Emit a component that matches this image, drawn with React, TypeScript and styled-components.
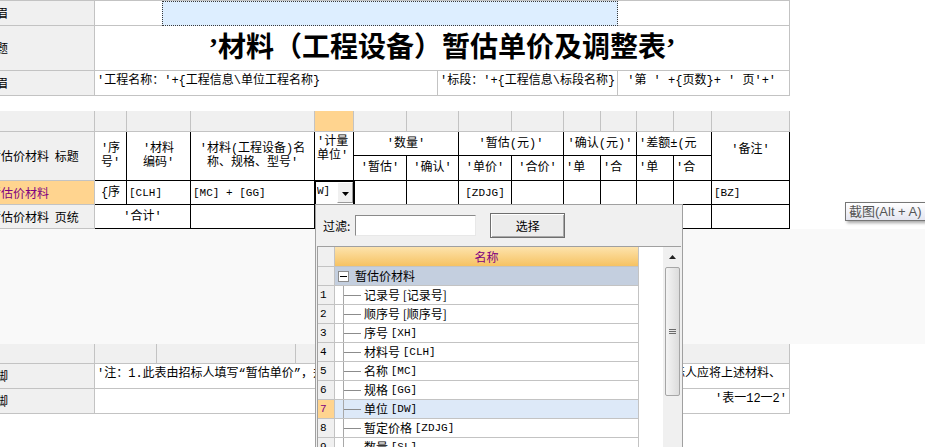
import React from "react";
import styled, { createGlobalStyle } from "styled-components";

const GRID = "#c3c3c3";
const ORANGE = "#ffd48f";
const PURPLE = "#800080";
const MONO_CJK = `"Liberation Mono", "Noto Sans CJK SC", monospace`;

const GlobalStyle = createGlobalStyle`
  * { box-sizing: border-box; }
  html, body { margin: 0; padding: 0; background: #fff; }
  body {
    font-family: ${MONO_CJK};
    font-size: 12px;
    line-height: 14px;
    color: #000;
  }
`;

const Page = styled.div`
  position: relative;
  width: 925px;
  height: 447px;
  overflow: hidden;
  display: flex;
  flex-direction: column;
  background: #fff;
`;

/* ---------- shared side labels ---------- */
const SideLabel = styled.div<{ $rows?: number; $active?: boolean }>`
  grid-column: 1;
  grid-row: span ${(p) => p.$rows ?? 1};
  display: flex;
  align-items: center;
  overflow: hidden;
  white-space: nowrap;
  background: ${(p) => (p.$active ? ORANGE : "#f0f0f0")};
  color: ${(p) => (p.$active ? PURPLE : "#000")};
  border-right: 1px solid ${GRID};
  border-bottom: 1px solid ${GRID};
  font-family: "Noto Sans CJK SC", sans-serif;
`;

const LabelText = styled.span<{ $shift: number }>`
  flex: none;
  margin-left: ${(p) => p.$shift}px;
  word-spacing: 3px;
`;

const Code = styled.span`
  font-family: "Liberation Mono", monospace;
  font-size: 11px;
`;

/* ---------- band 1 : report header ---------- */
const HeaderBand = styled.div`
  flex: none;
  display: grid;
  width: 790px;
  grid-template-columns: 95px 67px 276px 180px 172px;
  grid-template-rows: 25px 45px 25px;
  border-top: 1px solid ${GRID};
`;

const BandCell = styled.div<{ $cols?: number; $align?: "left" | "right"; $plain?: boolean }>`
  grid-column: span ${(p) => p.$cols ?? 1};
  border-right: ${(p) => (p.$plain ? "none" : `1px solid ${GRID}`)};
  border-bottom: 1px solid ${GRID};
  padding: 3px 2px 0;
  overflow: hidden;
  white-space: nowrap;
  text-align: ${(p) => p.$align ?? "left"};
`;

const SelectedRange = styled.div`
  grid-column: span 2;
  background: #ddeeff;
  border: 1px dotted #3a3a3a;
`;

const TitleCell = styled.div`
  grid-column: span 4;
  display: flex;
  align-items: center;
  justify-content: center;
  border-right: 1px solid ${GRID};
  border-bottom: 1px solid ${GRID};
  font-family: "Liberation Serif", "Noto Sans CJK SC", serif;
  font-size: 28px;
  font-weight: 700;
  line-height: 32px;
  white-space: nowrap;
`;

const BandGap = styled.div<{ $h: number; $tint?: boolean }>`
  flex: none;
  height: ${(p) => p.$h}px;
  background: ${(p) => (p.$tint ? "#f9f9f9" : "#fff")};
`;

/* ---------- band 2 : material table ---------- */
const COLS = [32, 64, 124, 39, 53, 52, 53, 52, 37, 36, 37, 38, 78];

const Sheet = styled.div`
  flex: none;
  display: grid;
  width: 790px;
  grid-template-columns: 95px ${COLS.map((c) => `${c}px`).join(" ")};
  grid-template-rows: 21px 24px 25px 24px 24px;
`;

const ColHead = styled.div<{ $active?: boolean }>`
  background: ${(p) => (p.$active ? ORANGE : "#f0f0f0")};
  border-right: 1px solid ${GRID};
  border-bottom: 1px solid ${GRID};
`;

const Cell = styled.div<{
  $rows?: number;
  $cols?: number;
  $align?: "left" | "center";
  $top?: number;
}>`
  grid-row: span ${(p) => p.$rows ?? 1};
  grid-column: span ${(p) => p.$cols ?? 1};
  display: flex;
  flex-direction: column;
  justify-content: ${(p) => (p.$top !== undefined ? "flex-start" : "center")};
  padding: ${(p) => (p.$top !== undefined ? `${p.$top}px 2px 0` : "0 2px")};
  text-align: ${(p) => p.$align ?? "center"};
  border-right: 1px solid #000;
  border-bottom: 1px solid #000;
  overflow: hidden;
  white-space: nowrap;
  background: #fff;
`;

const ActiveCell = styled.div`
  position: relative;
  z-index: 1;
  display: flex;
  justify-content: space-between;
  padding: 1px 0 1px 2px;
  background: #fff;
  border-right: 1px solid #000;
  border-bottom: 1px solid #000;
  outline: 2px solid #000;
  outline-offset: -1px;
`;

const CellValue = styled.span`
  padding-top: 2px;
  overflow: hidden;
  white-space: nowrap;
`;

const DropButton = styled.div`
  width: 16px;
  display: flex;
  align-items: center;
  justify-content: center;
  padding-top: 3px;
  background: #f0f0f0;
  border: 1px solid;
  border-color: #ffffff #9a9a9a #9a9a9a #ffffff;
`;

/* ---------- band 3 : footer ---------- */
const FooterBand = styled.div`
  flex: none;
  display: grid;
  width: 790px;
  grid-template-columns: 95px 62px 139px 150px 150px 194px;
  grid-template-rows: 20px 25px 25px;
`;

const FooterHead = styled.div`
  background: #f0f0f0;
  border-right: 1px solid ${GRID};
  border-bottom: 1px solid ${GRID};
`;

/* ---------- dropdown popup ---------- */
const Popup = styled.div`
  position: absolute;
  left: 315px;
  top: 204px;
  width: 368px;
  height: 250px;
  z-index: 5;
  display: flex;
  flex-direction: column;
  background: #f0f0f0;
  border: 1px solid #a0a0a0;
  font-family: "Noto Sans CJK SC", sans-serif;
`;

const FilterBar = styled.div`
  flex: none;
  height: 41px;
  display: flex;
  align-items: center;
  padding-left: 7px;
`;

const FilterInput = styled.div`
  width: 121px;
  height: 21px;
  margin-left: 5px;
  background: #fff;
  border: 1px solid;
  border-color: #8a8a8a #e8e8e8 #e8e8e8 #8a8a8a;
`;

const PickButton = styled.div`
  width: 75px;
  height: 25px;
  margin-left: 14px;
  display: flex;
  align-items: center;
  justify-content: center;
  background: #ececec;
  border: 1px solid #6e6e6e;
  box-shadow: inset 1px 1px 0 #ffffff, inset -1px -1px 0 #a8a8a8;
`;

const FieldGrid = styled.div`
  flex: 1;
  width: 364px;
  margin-left: 1px;
  display: flex;
  background: #fff;
  border-top: 1px solid #a0a0a0;
  border-left: 1px solid #a0a0a0;
  overflow: hidden;
`;

const FieldRows = styled.div`
  width: 321px;
  display: flex;
  flex-direction: column;
`;

const FieldRow = styled.div<{ $h?: number }>`
  flex: none;
  height: ${(p) => p.$h ?? 19}px;
  display: grid;
  grid-template-columns: 17px 304px;
`;

const RowNum = styled.div<{ $active?: boolean }>`
  display: flex;
  align-items: center;
  padding-left: 2px;
  font-family: "Liberation Mono", monospace;
  font-size: 11px;
  background: ${(p) => (p.$active ? ORANGE : "#f0f0f0")};
  color: ${(p) => (p.$active ? PURPLE : "#000")};
  border-right: 1px solid ${GRID};
  border-bottom: 1px solid ${GRID};
`;

const HeadName = styled.div`
  display: flex;
  align-items: center;
  justify-content: center;
  color: ${PURPLE};
  background: linear-gradient(#fde3ac, #f6c262);
  border-right: 1px solid ${GRID};
  border-bottom: 1px solid ${GRID};
`;

const NameCell = styled.div<{ $tone?: "group" | "active" }>`
  display: flex;
  align-items: center;
  white-space: nowrap;
  padding-left: ${(p) => (p.$tone === "group" ? 3 : 8)}px;
  background: ${(p) =>
    p.$tone === "group" ? "#c4cfdf" : p.$tone === "active" ? "#dde9f8" : "#fff"};
  border-right: 1px solid ${GRID};
  border-bottom: 1px solid ${GRID};
`;

const TreeGuide = styled.span`
  position: relative;
  align-self: stretch;
  width: 18px;
  margin-right: 3px;
  border-left: 1px solid #a8a8a8;
  &::after {
    content: "";
    position: absolute;
    left: 0;
    top: 50%;
    width: 17px;
    border-top: 1px solid #8c8c8c;
  }
`;

const Expander = styled.span`
  width: 11px;
  height: 11px;
  margin-right: 6px;
  display: flex;
  align-items: center;
  justify-content: center;
  background: #fff;
  border: 1px solid #8c8c8c;
  &::before {
    content: "";
    width: 7px;
    border-top: 1px solid #000;
  }
`;

const GridFiller = styled.div`
  width: 25px;
  background: #fff;
`;

const ScrollTrack = styled.div`
  width: 18px;
  display: flex;
  flex-direction: column;
  align-items: center;
  background: #f0f0f0;
`;

const ScrollArrow = styled.div`
  height: 20px;
  display: flex;
  align-items: center;
`;

const ScrollThumb = styled.div`
  width: 15px;
  height: 129px;
  display: flex;
  align-items: center;
  justify-content: center;
  border: 1px solid #a6a6a6;
  border-radius: 2px;
  background: linear-gradient(90deg, #f4f4f4, #dcdcdc);
`;

/* ---------- tooltip ---------- */
const Tooltip = styled.div`
  position: absolute;
  left: 845px;
  top: 202px;
  height: 19px;
  padding: 0 5px 0 3px;
  display: flex;
  align-items: center;
  white-space: nowrap;
  color: #555;
  font-family: "Liberation Sans", "Noto Sans CJK SC", sans-serif;
  font-size: 13px;
  background: linear-gradient(#ffffff, #e4e5f0);
  border: 1px solid #767676;
  box-shadow: 2px 2px 3px rgba(0, 0, 0, 0.35);
`;

const FIELDS: [string, string, boolean][] = [
  ["记录号", "[记录号]", false],
  ["顺序号", "[顺序号]", false],
  ["序号", "[XH]", true],
  ["材料号", "[CLH]", true],
  ["名称", "[MC]", true],
  ["规格", "[GG]", true],
  ["单位", "[DW]", true],
  ["暂定价格", "[ZDJG]", true],
  ["数量", "[SL]", true],
];

const NOTE =
  "'注：1.此表由招标人填写“暂估单价”，并在备注栏说明暂估价的材料、工程设备拟用在哪些清单项目上，投标人应将上述材料、";

export default function App() {
  return (
    <>
      <GlobalStyle />
      <Page>
        <HeaderBand>
          <SideLabel>
            <LabelText $shift={-16}>页眉</LabelText>
          </SideLabel>
          <BandCell $plain />
          <SelectedRange />
          <BandCell />

          <SideLabel>
            <LabelText $shift={-16}>标题</LabelText>
          </SideLabel>
          <TitleCell>’材料（工程设备）暂估单价及调整表’</TitleCell>

          <SideLabel>
            <LabelText $shift={-16}>页眉</LabelText>
          </SideLabel>
          <BandCell $cols={2}>'工程名称：'+{"{"}工程信息\单位工程名称{"}"}</BandCell>
          <BandCell>'标段：'+{"{"}工程信息\标段名称{"}"}</BandCell>
          <BandCell>&nbsp;'第 ' +{"{"}页数{"}"}+ ' 页'+'</BandCell>
        </HeaderBand>

        <BandGap $h={15} />

        <Sheet>
          <ColHead />
          {COLS.map((_, i) => (
            <ColHead key={i} $active={i === 3} />
          ))}

          <SideLabel $rows={2}>
            <LabelText $shift={-11}>暂估价材料 标题</LabelText>
          </SideLabel>
          <Cell $rows={2}>
            '序
            <br />
            号'
          </Cell>
          <Cell $rows={2}>
            '材料
            <br />
            编码'
          </Cell>
          <Cell $rows={2}>
            '材料(工程设备)名
            <br />
            称、规格、型号'
          </Cell>
          <Cell $rows={2} $align="left" $top={3}>
            '计量
            <br />
            单位'
          </Cell>
          <Cell $cols={2}>'数量'</Cell>
          <Cell $cols={2}>'暂估(元)'</Cell>
          <Cell $cols={2}>'确认(元)'</Cell>
          <Cell $cols={2} $align="left">
            '差额±(元
          </Cell>
          <Cell $rows={2} $top={11}>
            '备注'
          </Cell>
          <Cell>'暂估'</Cell>
          <Cell>'确认'</Cell>
          <Cell>'单价'</Cell>
          <Cell>'合价'</Cell>
          <Cell $align="left">'单</Cell>
          <Cell $align="left">'合</Cell>
          <Cell $align="left">'单</Cell>
          <Cell $align="left">'合</Cell>

          <SideLabel $active>
            <LabelText $shift={-11}>暂估价材料</LabelText>
          </SideLabel>
          <Cell>{"{"}序</Cell>
          <Cell $align="left">
            <Code>[CLH]</Code>
          </Cell>
          <Cell $align="left">
            <Code>[MC] + [GG]</Code>
          </Cell>
          <ActiveCell>
            <CellValue>
              <Code>W]</Code>
            </CellValue>
            <DropButton>
              <svg width="7" height="4" viewBox="0 0 7 4">
                <polygon points="0,0 7,0 3.5,4" fill="#000" />
              </svg>
            </DropButton>
          </ActiveCell>
          <Cell />
          <Cell />
          <Cell>
            <Code>[ZDJG]</Code>
          </Cell>
          <Cell />
          <Cell />
          <Cell />
          <Cell />
          <Cell />
          <Cell $align="left">
            <Code>[BZ]</Code>
          </Cell>

          <SideLabel>
            <LabelText $shift={-11}>暂估价材料 页统</LabelText>
          </SideLabel>
          <Cell $cols={2}>'合计'</Cell>
          <Cell />
          <Cell />
          <Cell />
          <Cell />
          <Cell />
          <Cell />
          <Cell />
          <Cell />
          <Cell />
          <Cell />
          <Cell />
        </Sheet>

        <BandGap $h={115} $tint />

        <FooterBand>
          <FooterHead />
          <FooterHead />
          <FooterHead />
          <FooterHead />
          <FooterHead />
          <FooterHead />

          <SideLabel>
            <LabelText $shift={-16}>页脚</LabelText>
          </SideLabel>
          <BandCell $cols={5}>{NOTE}</BandCell>

          <SideLabel>
            <LabelText $shift={-16}>页脚</LabelText>
          </SideLabel>
          <BandCell $cols={5} $align="right">
            '表一12一2'
          </BandCell>
        </FooterBand>

        <Popup>
          <FilterBar>
            <span>过滤:</span>
            <FilterInput />
            <PickButton>选择</PickButton>
          </FilterBar>
          <FieldGrid>
            <FieldRows>
              <FieldRow $h={20}>
                <RowNum />
                <HeadName>名称</HeadName>
              </FieldRow>
              <FieldRow>
                <RowNum />
                <NameCell $tone="group">
                  <Expander />
                  暂估价材料
                </NameCell>
              </FieldRow>
              {FIELDS.map(([name, code, latin], i) => (
                <FieldRow key={name}>
                  <RowNum $active={i === 6}>{i + 1}</RowNum>
                  <NameCell $tone={i === 6 ? "active" : undefined}>
                    <TreeGuide />
                    {name}&nbsp;{latin ? <Code>{code}</Code> : code}
                  </NameCell>
                </FieldRow>
              ))}
            </FieldRows>
            <GridFiller />
            <ScrollTrack>
              <ScrollArrow>
                <svg width="7" height="4" viewBox="0 0 7 4">
                  <polygon points="0,4 7,4 3.5,0" fill="#222" />
                </svg>
              </ScrollArrow>
              <ScrollThumb>
                <svg width="7" height="6" viewBox="0 0 7 6">
                  <path d="M0 0.5H7M0 2.5H7M0 4.5H7" stroke="#6b6b6b" strokeWidth="1" />
                </svg>
              </ScrollThumb>
            </ScrollTrack>
          </FieldGrid>
        </Popup>

        <Tooltip>截图(Alt + A)</Tooltip>
      </Page>
    </>
  );
}
